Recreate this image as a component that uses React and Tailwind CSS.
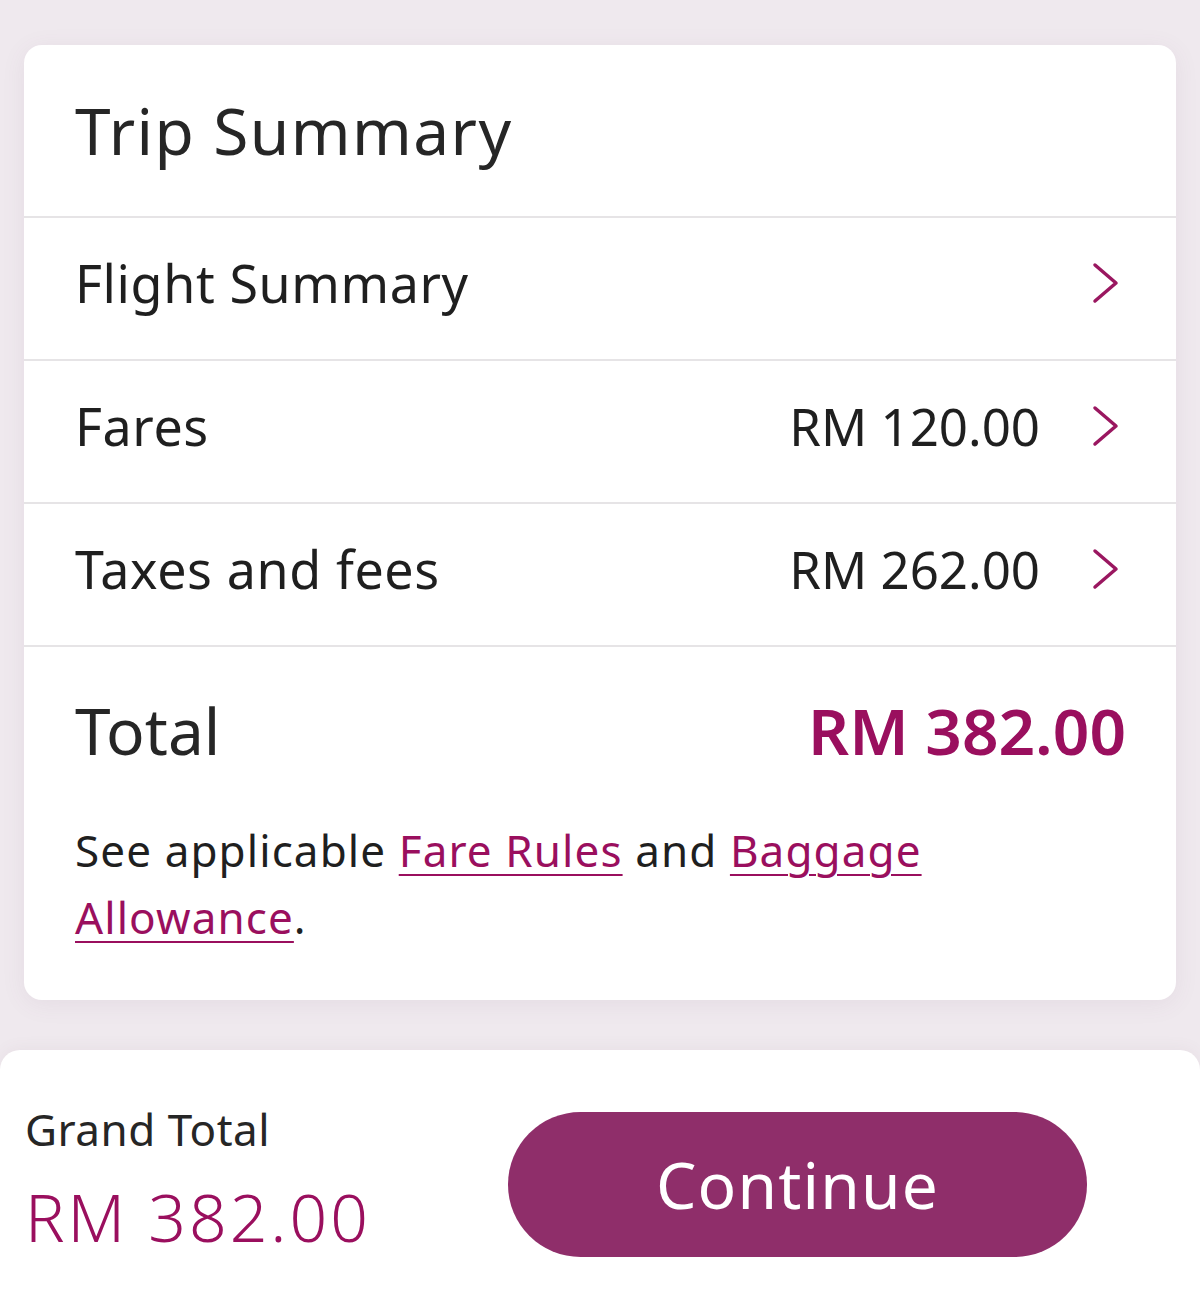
import React from 'react';

const Chevron = () => (
  <svg width="30" height="42" viewBox="0 0 30 42" fill="none" className="shrink-0">
    <path d="M5 3 L26 21 L5 39" stroke="#9a1760" strokeWidth="3.5" strokeLinecap="round" strokeLinejoin="round" />
  </svg>
);

const Row = ({ label, value }) => (
  <div className="flex items-center h-[143px] border-t-2 border-[#e6e4e6] pl-[51px] pr-[56px] pb-[11px]">
    <span className="flex-1 text-[52px] tracking-[0.6px] text-[#1f1f1f]">{label}</span>
    {value && <span className="text-[51px] text-[#1f1f1f] mr-[50px]">{value}</span>}
    <Chevron />
  </div>
);

const App = () => {
  return (
    <div
      className="w-[1200px] h-[1312px] bg-[#efe9ee] flex flex-col overflow-hidden"
      style={{ fontFamily: '"Noto Sans", "Open Sans", sans-serif' }}
    >
      <div className="px-[24px] pt-[45px]">
        <div className="bg-white rounded-[18px] shadow-[0_4px_24px_rgba(120,80,110,0.08)] overflow-hidden">
          <div className="h-[171px] flex items-center pl-[51px]">
            <h1 className="text-[64px] tracking-[1.4px] text-[#262626]">Trip Summary</h1>
          </div>
          <Row label="Flight Summary" />
          <Row label="Fares" value="RM 120.00" />
          <Row label="Taxes and fees" value="RM 262.00" />
          <div className="border-t-2 border-[#e6e4e6] pl-[51px] pr-[50px] pt-[52px] pb-[49px]">
            <div className="flex items-center justify-between leading-none">
              <span className="text-[64px] text-[#262626]">Total</span>
              <span className="text-[64px] font-semibold text-[#9a0f5e]">RM 382.00</span>
            </div>
            <p className="mt-[54px] text-[44px] leading-[67px] tracking-[1.1px] text-[#1f1f1f]">
              See applicable{' '}
              <a className="text-[#9a0f5e] underline underline-offset-[7px] decoration-2">Fare Rules</a> and{' '}
              <a className="text-[#9a0f5e] underline underline-offset-[7px] decoration-2">Baggage Allowance</a>.
            </p>
          </div>
        </div>
      </div>
      <div className="mt-[50px] flex-1 bg-white rounded-t-[20px] shadow-[0_-2px_16px_rgba(120,80,110,0.06)] flex items-start pl-[25px] pr-[113px]">
        <div className="flex-1 flex flex-col pt-[57px] leading-none">
          <span className="text-[44px] tracking-[0.5px] text-[#262626]">Grand Total</span>
          <span className="mt-[32px] text-[66px] font-light tracking-[3px] text-[#9a0f5e]">RM 382.00</span>
        </div>
        <button className="mt-[62px] w-[579px] h-[145px] rounded-full bg-[#8f2e6a] text-white text-[64px] tracking-[1.2px]">
          Continue
        </button>
      </div>
    </div>
  );
};

export default App;
